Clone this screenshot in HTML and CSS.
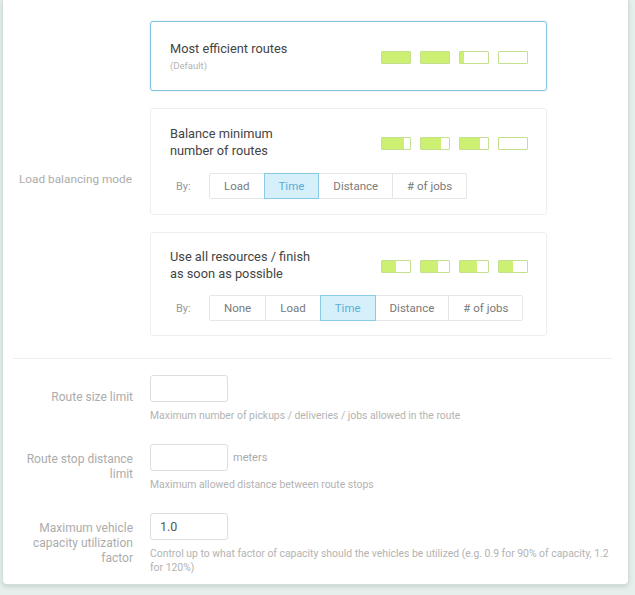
FILE: index.html
```html
<!DOCTYPE html>
<html>
<head>
<meta charset="utf-8">
<link rel="stylesheet" href="styles.css">
</head>
<body>
<div class="panel">
  <div class="row lb-row">
    <div class="label lb-label">Load balancing mode</div>
    <div class="options">
      <div class="opt selected">
        <div class="opt-head">
          <div class="opt-title">
            <div class="title">Most efficient routes</div>
            <div class="sub">(Default)</div>
          </div>
          <div class="meters">
            <div class="meter"><div class="fill" style="width:100%"></div></div>
            <div class="meter"><div class="fill" style="width:100%"></div></div>
            <div class="meter"><div class="fill" style="width:15%"></div></div>
            <div class="meter"><div class="fill" style="width:0%"></div></div>
          </div>
        </div>
      </div>
      <div class="opt">
        <div class="opt-head">
          <div class="opt-title">
            <div class="title">Balance minimum<br>number of routes</div>
          </div>
          <div class="meters">
            <div class="meter"><div class="fill" style="width:80%"></div></div>
            <div class="meter"><div class="fill" style="width:72%"></div></div>
            <div class="meter"><div class="fill" style="width:72%"></div></div>
            <div class="meter"><div class="fill" style="width:0%"></div></div>
          </div>
        </div>
        <div class="by">
          <span class="by-label">By:</span>
          <div class="btns">
            <span class="btn">Load</span>
            <span class="btn active">Time</span>
            <span class="btn">Distance</span>
            <span class="btn"># of jobs</span>
          </div>
        </div>
      </div>
      <div class="opt opt-last">
        <div class="opt-head">
          <div class="opt-title">
            <div class="title">Use all resources / finish<br>as soon as possible</div>
          </div>
          <div class="meters">
            <div class="meter"><div class="fill" style="width:50%"></div></div>
            <div class="meter"><div class="fill" style="width:60%"></div></div>
            <div class="meter"><div class="fill" style="width:60%"></div></div>
            <div class="meter"><div class="fill" style="width:50%"></div></div>
          </div>
        </div>
        <div class="by">
          <span class="by-label">By:</span>
          <div class="btns">
            <span class="btn">None</span>
            <span class="btn">Load</span>
            <span class="btn active">Time</span>
            <span class="btn">Distance</span>
            <span class="btn"># of jobs</span>
          </div>
        </div>
      </div>
    </div>
  </div>
  <div class="sep"></div>
  <div class="row field first">
    <div class="label">Route size limit</div>
    <div class="control">
      <div class="input-line"><div class="input"></div></div>
      <div class="help">Maximum number of pickups / deliveries / jobs allowed in the route</div>
    </div>
  </div>
  <div class="row field">
    <div class="label">Route stop distance<br>limit</div>
    <div class="control">
      <div class="input-line"><div class="input"></div><span class="unit">meters</span></div>
      <div class="help">Maximum allowed distance between route stops</div>
    </div>
  </div>
  <div class="row field">
    <div class="label">Maximum vehicle<br>capacity utilization<br>factor</div>
    <div class="control">
      <div class="input-line"><div class="input">1.0</div></div>
      <div class="help">Control up to what factor of capacity should the vehicles be utilized (e.g. 0.9 for 90% of capacity, 1.2 for 120%)</div>
    </div>
  </div>
</div>
</body>
</html>
```

FILE: styles.css
```css
html, body {
  margin: 0;
  padding: 0;
}
body {
  background: #e7efed;
  font-family: Roboto, "Liberation Sans", Arial, sans-serif;
  width: 635px;
  height: 595px;
  overflow: hidden;
}
.panel {
  box-sizing: border-box;
  width: 627px;
  height: 585px;
  margin-left: 2px;
  background: #fff;
  border: 1px solid #d3dfdb;
  border-top: none;
  border-radius: 0 0 5px 5px;
  box-shadow: 0 2px 4px rgba(120, 150, 140, 0.3);
  padding: 21px 16px 0 0;
}
.row {
  display: flex;
}
.label {
  width: 130px;
  flex: none;
  text-align: right;
  font-size: 12px;
  line-height: 15px;
  color: #acacac;
  margin-right: 17px;
}
.lb-row {
  align-items: center;
}
.lb-label {
  text-align: left;
  padding-left: 16px;
  box-sizing: border-box;
  padding-top: 2px;
  white-space: nowrap;
  font-size: 11.8px;
}
.options {
  width: 397px;
  display: flex;
  flex-direction: column;
  gap: 17px;
}
.opt {
  border: 1px solid #efefef;
  border-radius: 3px;
  padding: 16px 18px 15px 19px;
}
.opt.opt-last {
  padding-top: 15px;
  padding-bottom: 14px;
}
.opt.selected {
  border: 1.5px solid #86c4de;
  padding: 18px 18px 18px 19px;
  box-shadow: 0 0 2px rgba(134, 196, 222, 0.5);
}
.opt-head {
  display: flex;
  justify-content: space-between;
  align-items: center;
}
.title {
  font-size: 12.8px;
  line-height: 17px;
  color: #444;
}
.sub {
  font-size: 9.5px;
  color: #b3b3b3;
  margin-top: 2px;
  line-height: 13px;
}
.meters {
  display: flex;
  gap: 9px;
  padding-top: 2px;
}
.meter {
  width: 28px;
  height: 11px;
  border: 1px solid #c3e08f;
  background: #fff;
  border-radius: 1px;
  overflow: hidden;
}
.fill {
  height: 100%;
  background: #cdef72;
}
.by {
  display: flex;
  align-items: center;
  margin-top: 14px;
  padding-left: 6px;
}
.opt-last .by {
  margin-top: 13px;
}
.by-label {
  font-size: 11px;
  color: #999;
  width: 33px;
}
.btns {
  display: flex;
}
.btn {
  font-size: 11.5px;
  color: #7a7a7a;
  height: 24px;
  line-height: 24px;
  padding: 0 14px;
  border: 1px solid #e6e6e6;
  margin-left: -1px;
  background: #fff;
}
.btn:first-child {
  border-radius: 2px 0 0 2px;
  margin-left: 0;
}
.btn:last-child {
  border-radius: 0 2px 2px 0;
}
.btn.active {
  background: #d6f0fb;
  border-color: #8ccbe5;
  color: #5aaed6;
  position: relative;
}
.sep {
  height: 1px;
  background: #efefef;
  margin: 22px 0 16px 10px;
}
.field {
  margin-bottom: 21px;
}
.field .label {
  padding-top: 8px;
}
.field.first .label {
  padding-top: 15px;
}
.control {
  flex: 1;
}
.input-line {
  display: flex;
  align-items: center;
}
.input {
  box-sizing: border-box;
  width: 78px;
  height: 27px;
  border: 1px solid #dedede;
  border-radius: 3px;
  font-size: 12.5px;
  color: #555;
  line-height: 25px;
  padding-left: 9px;
}
.unit {
  font-size: 11px;
  color: #aaa;
  margin-left: 5px;
}
.help {
  font-size: 10.4px;
  line-height: 14px;
  color: #b3b3b3;
  margin-top: 7px;
}
```
